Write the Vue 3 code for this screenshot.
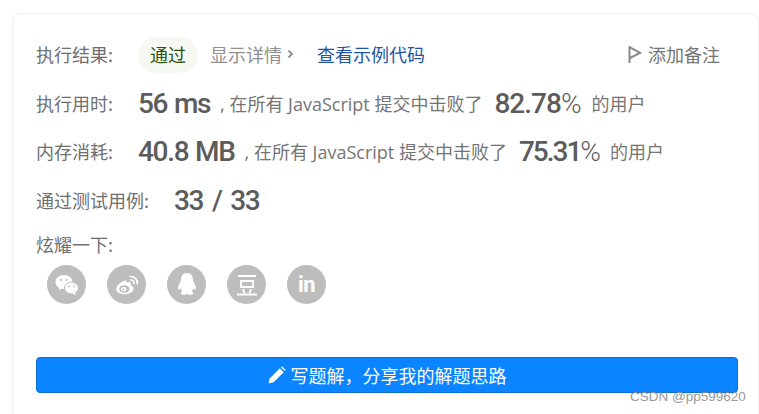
<script setup>
const stats = [
  { label: '执行用时:', value: '56 ms', pct: '82.78', narrow: false },
  { label: '内存消耗:', value: '40.8 MB', pct: '75.31', narrow: true },
]
</script>

<template>
  <div class="page">
    <section class="card">
      <div class="row result-row">
        <span class="label">执行结果:</span>
        <span class="pill">通过</span>
        <a class="details">显示详情<svg class="chev" width="7" height="10" viewBox="0 0 7 10"><path d="M1.500 1.500 5 5 1.500 8.500" fill="none" stroke="#8c8c8c" stroke-width="1.800"/></svg></a>
        <a class="sample">查看示例代码</a>
        <a class="note">
          <svg width="15" height="19" viewBox="0 0 15 19"><path d="M2.500 1v17M3 2.400 13 7.800 3 13" fill="none" stroke="#8a8a8a" stroke-width="2"/></svg>
          <span>添加备注</span>
        </a>
      </div>
      <div v-for="s in stats" :key="s.label" class="row stat-row">
        <span class="label">{{ s.label }}</span>
        <strong class="value">{{ s.value }}</strong>
        <span class="desc">, 在所有 JavaScript 提交中击败了</span>
        <strong class="pct" :class="{ narrow: s.narrow }">{{ s.pct }}<span class="percent">%</span></strong>
        <span class="desc tail">的用户</span>
      </div>
      <div class="row test-row">
        <span class="label test-label">通过测试用例:</span>
        <strong class="value test-value">33 / 33</strong>
      </div>
      <div class="share-title">炫耀一下:</div>
      <div class="socials">
        <span class="social">
          <svg width="24" height="22" viewBox="0 0 24 22" fill="#fff">
            <ellipse cx="9" cy="8" rx="8.600" ry="7"/>
            <path d="M4.500 12.500 4 16l4-2.500z"/>
            <ellipse cx="16.500" cy="14" rx="7" ry="5.900" stroke="#bdbdbd" stroke-width="1"/>
            <path d="M20 18.500 20.800 21.200 17.500 19.500z"/>
            <circle cx="6" cy="6" r="1.100" fill="#bdbdbd"/><circle cx="11.500" cy="6" r="1.100" fill="#bdbdbd"/>
            <circle cx="14" cy="12.500" r="0.900" fill="#bdbdbd"/><circle cx="19" cy="12.500" r="0.900" fill="#bdbdbd"/>
          </svg>
        </span>
        <span class="social">
          <svg width="24" height="20" viewBox="0 0 24 20">
            <path d="M10.500 5.500C6 6.500 1 11 1.200 14.300C1.500 18 6 19.500 10 19.300C15 19 18.500 16.500 18.500 13.500C18.500 11.500 16.500 10.800 15.800 10.500C16.500 8.500 15.500 7 13.500 7C12.500 7 11.500 7.300 11 7.500C11.300 6 11.200 5.400 10.500 5.500Z" fill="#fff"/>
            <ellipse cx="9.300" cy="14" rx="5.200" ry="3.800" fill="#bdbdbd"/>
            <ellipse cx="8.800" cy="14.300" rx="2.500" ry="2.200" fill="#fff"/>
            <circle cx="8.400" cy="14.600" r="1" fill="#bdbdbd"/>
            <path d="M15 1.500C19.500 1 23 4.500 22.300 9M15.500 5C17.800 4.800 19.400 6.500 19 8.700" fill="none" stroke="#fff" stroke-width="1.600" stroke-linecap="round"/>
          </svg>
        </span>
        <span class="social">
          <svg width="22" height="25" viewBox="0 0 22 25" fill="#fff">
            <path d="M11 1C6.500 1 5 4.500 5 8C5 9.500 3.500 11 2.800 13C2 15 1.800 17.500 2.800 18C3.500 18 4.300 17 4.700 16.300C5 17.500 5.500 18.500 6.500 19.300C5 20 4.500 21 5 22C6 23 9.500 23 11 22C12.500 23 16 23 17 22C17.500 21 17 20 15.500 19.300C16.500 18.500 17 17.500 17.300 16.300C17.700 17 18.500 18 19.200 18C20.200 17.500 20 15 19.200 13C18.500 11 17 9.500 17 8C17 4.500 15.500 1 11 1Z"/>
          </svg>
        </span>
        <span class="social">
          <svg width="22" height="22" viewBox="0 0 22 22" fill="none" stroke="#fff" stroke-width="1.800">
            <path d="M2 2h18M5 7h12v6H5zM7 15l1.500 4M15 15l-1.500 4M1 20.500h20"/>
          </svg>
        </span>
        <span class="social in">in</span>
      </div>
      <button class="cta">
        <svg width="18" height="18" viewBox="0 0 16 16" fill="#fff"><path d="M0.500 15.500 1.500 11 10.500 2 14 5.500 5 14.500Z"/><path d="M11.500 1 12.500 0.300 15.700 3.500 15 4.500Z"/></svg>
        <span>写题解，分享我的解题思路</span>
      </button>
    </section>
    <span class="watermark">CSDN @pp599620</span>
  </div>
</template>

<style scoped>
.page {
  width: 759px;
  height: 414px;
  overflow: hidden;
  position: relative;
  background: #fff;
  padding: 13px 0 0 12px;
  box-sizing: border-box;
  font-family: "Noto Sans CJK SC", "Noto Sans", sans-serif;
  color: #6b6b6b;
  font-size: 18px;
}
.card {
  width: 747px;
  height: 420px;
  box-sizing: border-box;
  border: 1px solid #f0f0f0;
  border-radius: 8px;
  padding: 23px 0 0 23px;
}
.row {
  display: flex;
  align-items: center;
  height: 36px;
  white-space: nowrap;
}
.label,
.details,
.sample,
.note,
.desc,
.value,
.pct {
  padding-bottom: 2px;
}
.label {
  width: 102px;
  flex: none;
  color: #6f6f6f;
}
.pill {
  width: 60px;
  height: 36px;
  line-height: 34px;
  text-align: center;
  border-radius: 18px;
  background: #f6f9f2;
  color: #2b5113;
}
.details {
  display: flex;
  align-items: center;
  gap: 5px;
  margin-left: 12px;
  color: #8f8f8f;
}
.sample {
  margin-left: 23px;
  color: #22559f;
}
.note {
  display: flex;
  align-items: center;
  gap: 6px;
  margin-left: auto;
  margin-right: 38px;
  color: #757575;
}
.stat-row {
  margin-top: 13px;
}
.stat-row + .stat-row {
  margin-top: 12px;
}
.value {
  font-family: Roboto, sans-serif;
  font-size: 28px;
  font-weight: 500;
  color: #5c5c5c;
  letter-spacing: -1.300px;
  word-spacing: 1px;
}
.desc {
  margin-left: 10px;
  font-size: 18px;
  color: #757575;
  font-family: "Open Sans", "Noto Sans CJK SC", sans-serif;
}
.pct {
  margin-left: 12px;
  font-family: Roboto, sans-serif;
  font-size: 28px;
  font-weight: 500;
  color: #5c5c5c;
  letter-spacing: -1px;
}
.pct.narrow {
  letter-spacing: -2px;
}
.percent {
  font-weight: 300;
}
.tail {
  margin-left: 11px;
}
.test-row {
  margin-top: 13px;
}
.test-label {
  width: 138px;
}
.test-value {
  word-spacing: 3px;
}
.share-title {
  margin-top: 13px;
  height: 26px;
  line-height: 24px;
  color: #6f6f6f;
}
.socials {
  display: flex;
  gap: 21px;
  margin: 7px 0 0 11px;
}
.social {
  width: 39px;
  height: 39px;
  border-radius: 50%;
  background: #bdbdbd;
  display: flex;
  align-items: center;
  justify-content: center;
}
.in {
  color: #fff;
  font-family: Roboto, sans-serif;
  font-weight: 700;
  font-size: 22px;
  letter-spacing: -0.500px;
  line-height: 1;
}
.cta {
  display: flex;
  align-items: center;
  justify-content: center;
  gap: 5px;
  width: 702px;
  height: 36px;
  margin-top: 53px;
  padding: 0;
  border: 1px solid #0b6fd1;
  border-radius: 4px;
  background: #0a84ff;
  color: #fff;
  font: 18px "Noto Sans CJK SC", sans-serif;
}
.watermark {
  position: absolute;
  left: 630px;
  top: 389px;
  font: 13.500px "Liberation Sans", sans-serif;
  color: #8e8e8e;
  opacity: 0.9;
}
</style>
